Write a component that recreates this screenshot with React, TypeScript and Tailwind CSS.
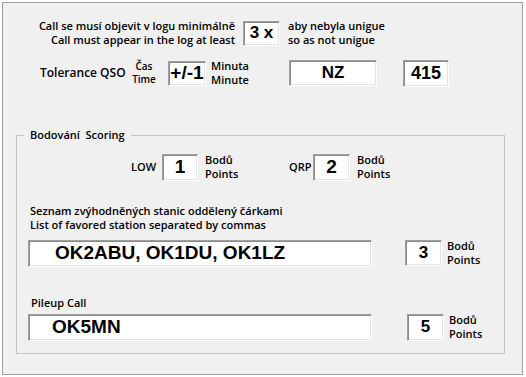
import React from "react";

const font = "font-['Open_Sans',sans-serif] font-semibold text-black whitespace-nowrap";
const label = `${font} text-[11px] leading-[14px]`;
const value = "font-['Liberation_Sans',Arial,sans-serif] font-bold text-black";
const sunken =
  "bg-white border border-t-[#a0a0a0] border-l-[#a0a0a0] border-r-white border-b-white shadow-[inset_1px_1px_0_#8a8a8a,inset_-1px_-1px_0_#e3e3e3] flex items-center";

function Box({ text, className, size }: { text: string; className: string; size: string }) {
  return (
    <div className={`${sunken} justify-center ${className}`}>
      <span className={`${value} ${size}`}>{text}</span>
    </div>
  );
}

function Points({ className }: { className: string }) {
  return (
    <div className={`${label} ${className}`}>
      <div>Bodů</div>
      <div>Points</div>
    </div>
  );
}

export default function App() {
  return (
    <div className="min-h-[377px] bg-white pl-[2px] pt-[2px]">
      <div className="flex h-[373px] w-[521px] flex-col border border-[#a0a0a0] bg-[#f0f0f0]">
        {/* minimum log appearance */}
        <div className="mt-[16px] flex items-center">
          <div className={`${label} w-[232px] text-right`}>
            <div>Call se musí objevit v logu minimálně</div>
            <div>Call must appear in the log at least</div>
          </div>
          <Box text="3 x" className="ml-[8px] h-[25px] w-[37px]" size="text-[17px]" />
          <div className={`${label} ml-[8px]`}>
            <div>aby nebyla unigue</div>
            <div>so as not unigue</div>
          </div>
        </div>

        {/* tolerance */}
        <div className="mt-[12px] flex items-center">
          <div className={`${font} ml-[37px] w-[84px] text-[12px] leading-[14px]`}>Tolerance QSO</div>
          <div className={`${font} ml-[7px] w-[26px] text-center text-[10px] leading-[13px]`}>
            <div>Čas</div>
            <div>Time</div>
          </div>
          <Box text="+/-1" className="ml-[11px] h-[25px] w-[38px]" size="text-[19px]" />
          <div className={`${label} ml-[5px] w-[45px]`}>
            <div>Minuta</div>
            <div>Minute</div>
          </div>
          <Box text="NZ" className="ml-[33px] h-[26px] w-[88px]" size="text-[17px]" />
          <Box text="415" className="ml-[26px] h-[27px] w-[46px]" size="text-[18px]" />
        </div>

        {/* scoring */}
        <fieldset className="ml-[13px] mt-[41px] w-[489px] border border-[#c4c4c4] pb-[12px]">
          <legend className={`${label} ml-[7px] px-[6px]`}>Bodování&nbsp; Scoring</legend>

          <div className="mt-[11px] flex items-center">
            <div className={`${label} ml-[114px] w-[26px]`}>LOW</div>
            <Box text="1" className="ml-[5px] h-[27px] w-[36px]" size="text-[19px]" />
            <Points className="ml-[7px] w-[40px]" />
            <div className={`${label} ml-[44px] w-[20px]`}>QRP</div>
            <Box text="2" className="ml-[4px] h-[27px] w-[37px]" size="text-[19px]" />
            <Points className="ml-[7px]" />
          </div>

          <div className={`${label} ml-[13px] mt-[23px]`}>
            <div>Seznam zvýhodněných stanic oddělený čárkami</div>
            <div>List of favored station separated by commas</div>
          </div>

          <div className="mt-[7px] flex items-center">
            <div className={`${sunken} ml-[11px] h-[27px] w-[344px] pl-[26px]`}>
              <span className={`${value} text-[19px]`}>OK2ABU, OK1DU, OK1LZ</span>
            </div>
            <Box text="3" className="ml-[33px] h-[26px] w-[37px]" size="text-[17px]" />
            <Points className="ml-[5px]" />
          </div>

          <div className={`${label} ml-[14px] mt-[29px]`}>Pileup Call</div>

          <div className="mt-[3px] flex items-center">
            <div className={`${sunken} ml-[11px] h-[27px] w-[344px] pl-[23px]`}>
              <span className={`${value} text-[19px]`}>OK5MN</span>
            </div>
            <Box text="5" className="ml-[35px] h-[27px] w-[37px]" size="text-[17px]" />
            <Points className="ml-[5px]" />
          </div>
        </fieldset>
      </div>
    </div>
  );
}
